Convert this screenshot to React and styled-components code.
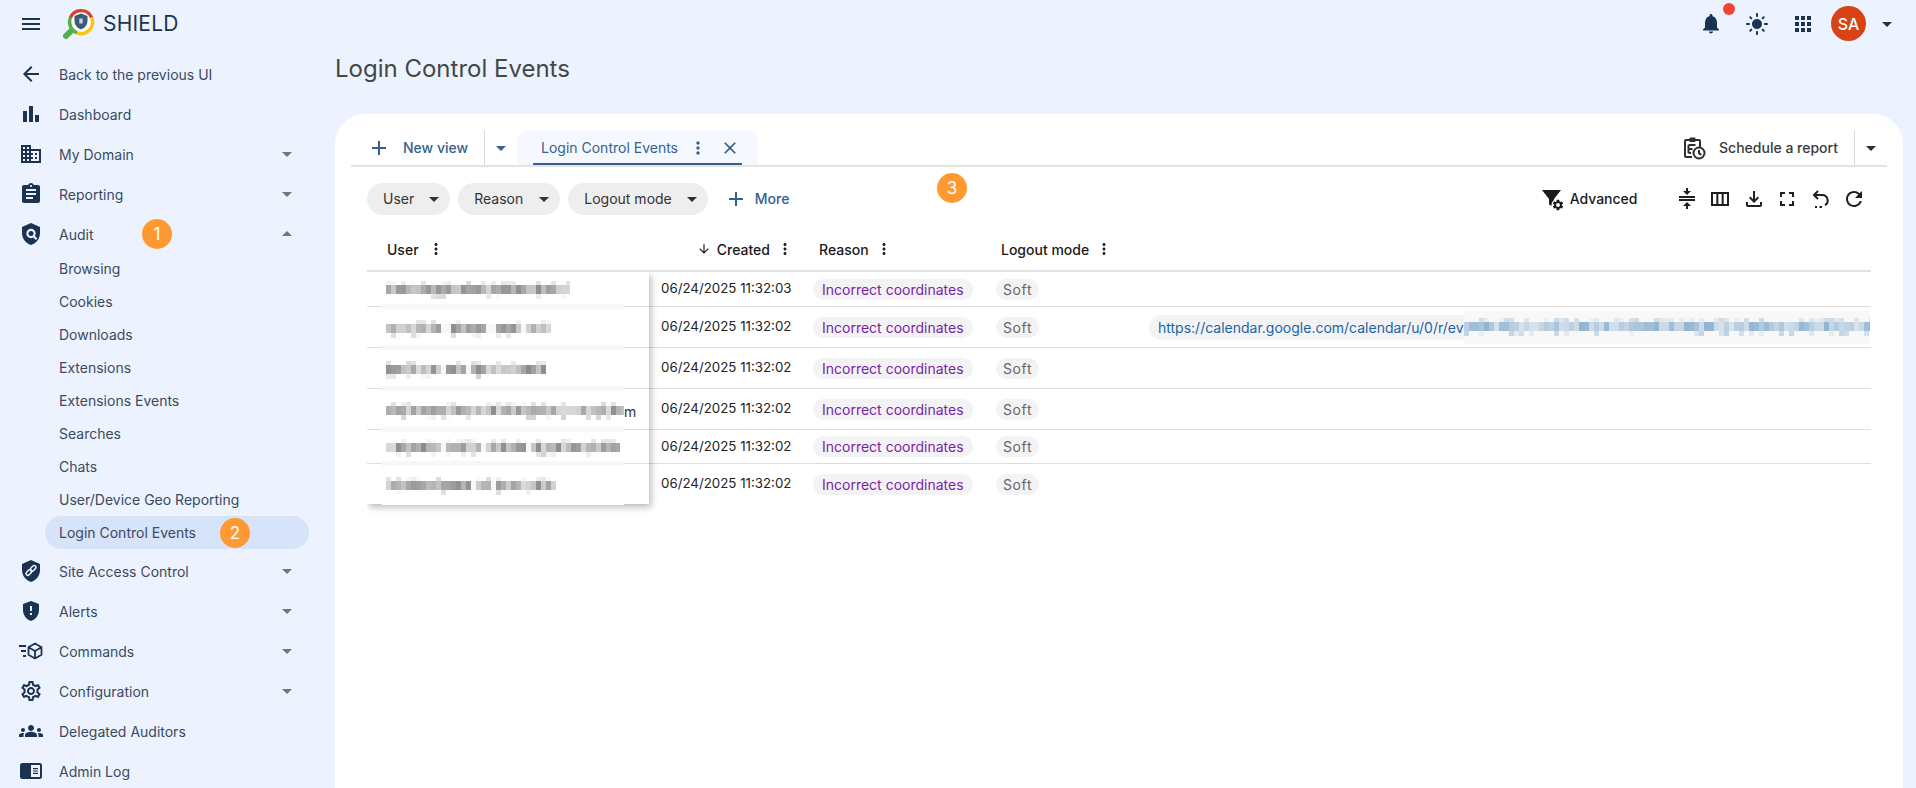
import React from "react";
import styled, { createGlobalStyle } from "styled-components";
import {
  MdMenu,
  MdArrowBack,
  MdBarChart,
  MdDomain,
  MdAssignment,
  MdGppMaybe,
  MdOutlineSettings,
  MdSettings,
  MdGroups,
  MdArrowDropDown,
  MdArrowDropUp,
  MdNotifications,
  MdLightMode,
  MdApps,
  MdAdd,
  MdMoreVert,
  MdClose,
  MdCompress,
  MdOutlineViewColumn,
  MdOutlineFileDownload,
  MdFullscreen,
  MdRefresh,
  MdArrowDownward,
} from "react-icons/md";

const SHIELD = "M12 1L3 5v6c0 5.55 3.84 10.74 9 12 5.16-1.26 9-6.45 9-12V5l-9-4z";
const BG = "#ecf3ff";

const GlobalStyle = createGlobalStyle`
  html, body {
    margin: 0;
    height: 100%;
    overflow: hidden;
    background: ${BG};
    font-family: Inter, "Liberation Sans", sans-serif;
  }
  * { box-sizing: border-box; }
`;

const Page = styled.div`
  width: 1916px;
  height: 788px;
  display: flex;
  flex-direction: column;
  overflow: hidden;
  background: ${BG};
`;

const TopBar = styled.header`
  height: 47px;
  flex: none;
  display: flex;
  align-items: center;
  padding: 0 17px 0 19px;
  color: #1b3350;
`;

const LogoBox = styled.div`
  margin-left: 19px;
  width: 34px;
  height: 34px;
  flex: none;
`;

const Brand = styled.span`
  margin-left: 7px;
  padding-bottom: 1px;
  font-size: 21px;
  color: #1b3350;
  letter-spacing: 0.2px;
`;

const TopIcons = styled.div`
  margin-left: auto;
  display: flex;
  align-items: center;
`;

const TopIcon = styled.div`
  position: relative;
  width: 24px;
  height: 24px;
  margin-right: ${(p) => p.$gap}px;
  color: #1b3350;
  display: flex;
  align-items: center;
  justify-content: center;
`;

const RedDot = styled.span`
  position: absolute;
  top: -9px;
  left: 24px;
  width: 12px;
  height: 12px;
  border-radius: 50%;
  background: #f44336;
`;

const Avatar = styled.div`
  width: 35px;
  height: 35px;
  margin-right: 9px;
  border-radius: 50%;
  background: #d84315;
  color: #fff;
  font-size: 16px;
  font-weight: 500;
  display: flex;
  align-items: center;
  justify-content: center;
`;

const Body = styled.div`
  flex: 1;
  display: flex;
  min-height: 0;
`;

const Sidebar = styled.nav`
  width: 335px;
  flex: none;
  padding-top: 7px;
`;

const NavRow = styled.div`
  position: relative;
  height: 40px;
  display: flex;
  align-items: center;
  padding: 0 36px 0 19px;
  color: #3b4a5e;
  font-size: 14px;
`;

const NavIcon = styled.span`
  width: 24px;
  height: 24px;
  flex: none;
  margin-right: 16px;
  color: #1b3350;
  display: flex;
  align-items: center;
  justify-content: center;
`;

const NavCaret = styled.span`
  margin-left: auto;
  display: flex;
  color: #757575;
`;

const SubList = styled.div`
  margin: -2px 0 2px;
`;

const SubRow = styled.div`
  position: relative;
  height: 33px;
  width: 264px;
  margin-left: 45px;
  display: flex;
  align-items: center;
  padding-left: 14px;
  border-radius: 17px;
  color: #3b4a5e;
  font-size: 14px;
  background: ${(p) => (p.$active ? "#d6e3f8" : "transparent")};
`;

const Badge = styled.span`
  position: absolute;
  left: ${(p) => p.$left}px;
  top: ${(p) => p.$top}px;
  width: 30px;
  height: 30px;
  border-radius: 50%;
  background: #ff9a33;
  color: #fff;
  font-size: 17px;
  display: flex;
  align-items: center;
  justify-content: center;
  z-index: 5;
`;

const Main = styled.main`
  flex: 1;
  min-width: 0;
  display: flex;
  flex-direction: column;
  padding-right: 13px;
`;

const Title = styled.h1`
  margin: 0;
  height: 67px;
  padding: 7px 0 0 0;
  font-size: 24px;
  line-height: 29px;
  font-weight: 400;
  color: #444746;
`;

const Panel = styled.section`
  position: relative;
  flex: 1;
  background: #fff;
  border-radius: 30px 30px 0 0;
  padding: 16px 16px 0;
`;

const TabBar = styled.div`
  height: 37px;
  display: flex;
  border-bottom: 2px solid #e3e3e3;
`;

const NewView = styled.div`
  width: 134px;
  height: 35px;
  display: flex;
  align-items: center;
  padding-left: 16px;
  border-right: 1px solid #d9d9d9;
  color: #36618e;
  font-size: 14px;
  font-weight: 500;
  gap: 12px;
`;

const SplitCaret = styled.span`
  width: 32px;
  display: flex;
  align-items: center;
  justify-content: center;
  color: ${(p) => p.$color};
`;

const Tab = styled.div`
  width: 241px;
  height: 35px;
  padding: 0 16px;
  background: #f5f8fe;
  border-radius: 12px 12px 0 0;
`;

const TabInner = styled.div`
  height: 35px;
  display: flex;
  align-items: center;
  padding: 2px 0 0 8px;
  border-bottom: 2px solid #36618e;
  color: #36618e;
  font-size: 14px;
`;

const TabIcon = styled.span`
  display: flex;
  margin-left: ${(p) => p.$gap}px;
  color: #36618e;
`;

const ScheduleBtn = styled.div`
  margin-left: auto;
  height: 35px;
  display: flex;
  align-items: center;
  gap: 13px;
  padding-right: 16px;
  border-right: 1px solid #d9d9d9;
  color: #3a3a3a;
  font-size: 14px;
  font-weight: 500;
`;

const Toolbar = styled.div`
  height: 63px;
  display: flex;
  align-items: center;
  padding: 0 21px 0 16px;
  gap: 8px;
`;

const FilterChip = styled.div`
  height: 32px;
  display: flex;
  align-items: center;
  padding: 0 4px 0 16px;
  gap: ${(p) => p.$gap}px;
  border-radius: 16px;
  background: #eeeeee;
  color: #333;
  font-size: 14px;
`;

const MoreBtn = styled.div`
  margin-left: 8px;
  display: flex;
  align-items: center;
  gap: 7px;
  color: #36618e;
  font-size: 14px;
  font-weight: 500;
`;

const Advanced = styled.div`
  margin-left: auto;
  margin-right: 29px;
  display: flex;
  align-items: center;
  gap: 6px;
  color: #1a1a1a;
  font-size: 14px;
  font-weight: 500;
`;

const ToolIcons = styled.div`
  display: flex;
  gap: 9.5px;
  color: #1f1f1f;
`;

const Table = styled.div`
  position: relative;
  margin: 0 16px;
`;

const HeadRow = styled.div`
  height: 42px;
  display: flex;
  border-bottom: 2px solid #e3e3e3;
`;

const HeadCell = styled.div`
  width: ${(p) => p.$w}px;
  flex: none;
  display: flex;
  align-items: center;
  justify-content: ${(p) => (p.$end ? "flex-end" : "flex-start")};
  padding: ${(p) => p.$pad};
  padding-bottom: 2px;
  gap: ${(p) => p.$gap || 6}px;
  color: #1a1a1a;
  font-size: 14px;
  font-weight: 500;
`;

const Dots = styled.span`
  display: flex;
  color: #1f1f1f;
`;

const Row = styled.div`
  position: relative;
  height: ${(p) => p.$h}px;
  display: flex;
  align-items: center;
  border-bottom: ${(p) => (p.$last ? "0" : "1px solid #dedede")};
`;

const UserCell = styled.div`
  position: relative;
  width: 282px;
  height: 100%;
  flex: none;
  z-index: 1;
  font-size: 14px;
  color: #333;
`;

const UserShadow = styled.div`
  position: absolute;
  left: 0;
  top: 42px;
  bottom: 0;
  width: 282px;
  box-shadow: 2px 3px 7px rgba(0, 0, 0, 0.28);
  clip-path: inset(0 -12px -12px 0);
  pointer-events: none;
`;

const Patch = styled.div`
  position: absolute;
  left: 15px;
  width: 242px;
  top: ${(p) => (p.$first ? "0" : "-3px")};
  bottom: -1px;
  background: #fff;
  border-top: ${(p) => (p.$first ? "0" : "5px solid #f7f7f7")};
  display: flex;
  align-items: center;
  padding-left: 4px;
`;

const Trail = styled.span`
  position: absolute;
  left: 242px;
  top: 50%;
  transform: translateY(-50%);
`;

const DateCell = styled.div`
  width: 154px;
  flex: none;
  padding: 0 0 2px 12px;
  font-size: 13.3px;
  color: #222;
  white-space: nowrap;
`;

const ChipCell = styled.div`
  width: ${(p) => p.$w}px;
  flex: none;
  padding-left: 10px;
`;

const Tag = styled.span`
  display: inline-block;
  height: 21px;
  line-height: 21px;
  padding: 0 ${(p) => p.$pad}px;
  border-radius: 11px;
  background: #f3f3f6;
  color: ${(p) => p.$color};
  font-size: 14px;
  letter-spacing: ${(p) => p.$ls || 0}px;
  white-space: nowrap;
`;

const LinkCell = styled.div`
  flex: 1;
  min-width: 0;
  overflow: hidden;
  padding-left: 10px;
  height: 100%;
  display: flex;
  align-items: center;
`;

const LinkChip = styled.div`
  height: 25px;
  display: flex;
  align-items: center;
  padding-left: 9px;
  border-radius: 13px 0 0 13px;
  background: #f3f3f6;
  color: #1b64a6;
  font-size: 14px;
  white-space: nowrap;
`;

const LinkBlur = styled.div`
  height: 33px;
  display: flex;
  align-items: center;
  background: #f8f8f8;
  flex: none;
`;

function rng(seed) {
  let s = seed;
  return () => {
    s = (s * 9301 + 49297) % 233280;
    return s / 233280;
  };
}

// pixelated redaction, as in the screenshot
function Mosaic({ width, seed, rgb = "90,90,90", gaps = [], strength = 1 }) {
  const r = rng(seed);
  const cells = [];
  const size = 5;
  for (let x = 0; x < width; x += size) {
    const inGap = gaps.some(([a, b]) => x >= a && x < b);
    const mid = inGap ? 0.05 : (0.22 + r() * 0.48) * strength;
    cells.push(<rect key={x} x={x} y="4" width={size} height="9" fill={`rgba(${rgb},${mid})`} />);
    if (r() > 0.55 && !inGap) {
      cells.push(
        <rect key={x + "t"} x={x} y="0" width={size} height="4" fill={`rgba(${rgb},${r() * 0.22})`} />
      );
    }
    if (r() > 0.75 && !inGap) {
      cells.push(
        <rect key={x + "b"} x={x} y="13" width={size} height="5" fill={`rgba(${rgb},${r() * 0.28})`} />
      );
    }
  }
  return (
    <svg width={width} height="18">
      {cells}
    </svg>
  );
}

const Logo = () => (
  <svg viewBox="0 0 34 34" width="34" height="34">
    <path d="M10 23 L4 29" stroke="#55b047" strokeWidth="6" strokeLinecap="round" />
    <circle cx="19" cy="15" r="11.5" fill="#fff" />
    <path d="M8.3 11 A11.5 11.5 0 0 1 29.6 10.5" fill="none" stroke="#d8412f" strokeWidth="3.4" />
    <path d="M29.6 10.5 A11.5 11.5 0 0 1 15 25.8" fill="none" stroke="#f5c518" strokeWidth="3.4" />
    <path d="M15 25.8 A11.5 11.5 0 0 1 8.3 11" fill="none" stroke="#55b047" strokeWidth="3.4" />
    <path d="M19 6.5l-6.5 2.6v4.6c0 4 2.8 7.6 6.5 8.6 3.7-1 6.5-4.6 6.5-8.6V9.1z" fill="#3d5a78" />
    <rect x="17.3" y="11.5" width="3.4" height="5" fill="#c6d3e0" />
  </svg>
);

const AuditIcon = () => (
  <svg viewBox="0 0 24 24" width="24" height="24" fill="currentColor">
    <path d={SHIELD} />
    <circle cx="12" cy="11.5" r="3.6" fill="none" stroke={BG} strokeWidth="2.2" />
    <path d="M14.6 14.2l3 3" stroke={BG} strokeWidth="2.2" />
  </svg>
);

const SiteIcon = () => (
  <svg viewBox="0 0 24 24" width="24" height="24" fill="currentColor">
    <path d={SHIELD} />
    <g fill="none" stroke={BG} strokeWidth="1.5">
      <rect x="6.6" y="11.6" width="6.6" height="3.6" rx="1.8" transform="rotate(-45 9.9 13.4)" />
      <rect x="10.8" y="7.6" width="6.6" height="3.6" rx="1.8" transform="rotate(-45 14.1 9.4)" />
    </g>
  </svg>
);

const CommandsIcon = () => (
  <svg viewBox="0 0 24 24" width="24" height="24" fill="none" stroke="currentColor" strokeWidth="1.8">
    <path d="M0 7h7M2 12h5M4 17h3" />
    <path d="M16 4.5l6.5 3.7v7.6L16 19.5l-6.5-3.7V8.2zM9.5 8.2L16 12l6.5-3.8M16 12v7.5" />
  </svg>
);

const AdminLogIcon = () => (
  <svg viewBox="0 0 24 24" width="24" height="24" fill="currentColor">
    <rect x="1" y="4" width="22" height="16" rx="2.5" />
    <rect x="12" y="6" width="9" height="12" fill={BG} />
    <path d="M14 9h5v1.2h-5zM14 11.4h5v1.2h-5zM14 13.8h5V15h-5z" />
  </svg>
);

const ScheduleIcon = () => (
  <svg viewBox="0 0 24 24" width="24" height="24" fill="none" stroke="#2f2f2f" strokeWidth="2">
    <path d="M10 21H4a1 1 0 0 1-1-1V5a1 1 0 0 1 1-1h13a1 1 0 0 1 1 1v6" />
    <rect x="7.5" y="1.5" width="6" height="4.5" fill="#2f2f2f" stroke="none" rx="1" />
    <path d="M6.5 9h7M6.5 13h4M6.5 17h2.5M6.5 9v8" />
    <circle cx="17" cy="17" r="5.5" />
    <path d="M17 14v3.2l2.4 1.6" />
  </svg>
);

const FilterGearIcon = () => (
  <svg viewBox="0 0 24 24" width="24" height="24" fill="#1a1a1a">
    <path d="M2 3h19l-7 9v8l-5-2.5V12z" />
    <circle cx="18" cy="18" r="6.5" fill="#fff" />
    <MdSettings x="11.5" y="11.5" size={13} color="#1a1a1a" />
  </svg>
);

const ResetIcon = () => (
  <svg viewBox="0 0 24 24" width="24" height="24" fill="none" stroke="#1f1f1f" strokeWidth="2">
    <path d="M9 4L5 8l4 4" />
    <path d="M5 8h8a5.5 5.5 0 0 1 3 10.2" />
    <path d="M13 20h-2.5M8 20H6" />
  </svg>
);

const sub = [
  "Browsing",
  "Cookies",
  "Downloads",
  "Extensions",
  "Extensions Events",
  "Searches",
  "Chats",
  "User/Device Geo Reporting",
];

const rows = [
  { h: 35, date: "06/24/2025 11:32:03", w: 184, seed: 11, gaps: [] },
  { h: 41, date: "06/24/2025 11:32:02", w: 165, seed: 27, gaps: [[55, 65], [100, 110], [135, 140]], link: true },
  { h: 41, date: "06/24/2025 11:32:02", w: 160, seed: 43, gaps: [[55, 60], [80, 85]] },
  { h: 41, date: "06/24/2025 11:32:02", w: 238, seed: 59, gaps: [], trail: "m" },
  { h: 34, date: "06/24/2025 11:32:02", w: 234, seed: 71, gaps: [[55, 60], [95, 100], [140, 145]] },
  { h: 40, date: "06/24/2025 11:32:02", w: 170, seed: 97, gaps: [[85, 90], [105, 110]], last: true },
];

export default function App() {
  return (
    <Page>
      <GlobalStyle />
      <TopBar>
        <MdMenu size={24} />
        <LogoBox>
          <Logo />
        </LogoBox>
        <Brand>SHIELD</Brand>
        <TopIcons>
          <TopIcon $gap={22}>
            <MdNotifications size={27} />
            <RedDot />
          </TopIcon>
          <TopIcon $gap={22}>
            <MdLightMode size={24} />
          </TopIcon>
          <TopIcon $gap={16}>
            <MdApps size={24} />
          </TopIcon>
          <Avatar>SA</Avatar>
          <TopIcon $gap={0}>
            <MdArrowDropDown size={24} />
          </TopIcon>
        </TopIcons>
      </TopBar>
      <Body>
        <Sidebar>
          <NavRow>
            <NavIcon><MdArrowBack size={24} /></NavIcon>
            Back to the previous UI
          </NavRow>
          <NavRow>
            <NavIcon><MdBarChart size={32} /></NavIcon>
            Dashboard
          </NavRow>
          <NavRow>
            <NavIcon><MdDomain size={24} /></NavIcon>
            My Domain
            <NavCaret><MdArrowDropDown size={24} /></NavCaret>
          </NavRow>
          <NavRow>
            <NavIcon><MdAssignment size={24} /></NavIcon>
            Reporting
            <NavCaret><MdArrowDropDown size={24} /></NavCaret>
          </NavRow>
          <NavRow>
            <NavIcon><AuditIcon /></NavIcon>
            Audit
            <Badge $left={142} $top={5}>1</Badge>
            <NavCaret><MdArrowDropUp size={24} /></NavCaret>
          </NavRow>
          <SubList>
            {sub.map((s) => (
              <SubRow key={s}>{s}</SubRow>
            ))}
            <SubRow $active>
              Login Control Events
              <Badge $left={175} $top={2}>2</Badge>
            </SubRow>
          </SubList>
          <NavRow>
            <NavIcon><SiteIcon /></NavIcon>
            Site Access Control
            <NavCaret><MdArrowDropDown size={24} /></NavCaret>
          </NavRow>
          <NavRow>
            <NavIcon><MdGppMaybe size={24} /></NavIcon>
            Alerts
            <NavCaret><MdArrowDropDown size={24} /></NavCaret>
          </NavRow>
          <NavRow>
            <NavIcon><CommandsIcon /></NavIcon>
            Commands
            <NavCaret><MdArrowDropDown size={24} /></NavCaret>
          </NavRow>
          <NavRow>
            <NavIcon><MdOutlineSettings size={24} /></NavIcon>
            Configuration
            <NavCaret><MdArrowDropDown size={24} /></NavCaret>
          </NavRow>
          <NavRow>
            <NavIcon><MdGroups size={26} /></NavIcon>
            Delegated Auditors
          </NavRow>
          <NavRow>
            <NavIcon><AdminLogIcon /></NavIcon>
            Admin Log
          </NavRow>
        </Sidebar>
        <Main>
          <Title>Login Control Events</Title>
          <Panel>
            <TabBar>
              <NewView>
                <MdAdd size={24} />
                New view
              </NewView>
              <SplitCaret $color="#36618e"><MdArrowDropDown size={24} /></SplitCaret>
              <Tab>
                <TabInner>
                  Login Control Events
                  <TabIcon $gap={10}><MdMoreVert size={20} /></TabIcon>
                  <TabIcon $gap={12}><MdClose size={20} /></TabIcon>
                </TabInner>
              </Tab>
              <ScheduleBtn>
                <ScheduleIcon />
                Schedule a report
              </ScheduleBtn>
              <SplitCaret $color="#2f2f2f"><MdArrowDropDown size={24} /></SplitCaret>
            </TabBar>
            <Badge $left={602} $top={59}>3</Badge>
            <Toolbar>
              <FilterChip $gap={8}>User<MdArrowDropDown size={24} /></FilterChip>
              <FilterChip $gap={9}>Reason<MdArrowDropDown size={24} /></FilterChip>
              <FilterChip $gap={8}>Logout mode<MdArrowDropDown size={24} /></FilterChip>
              <MoreBtn><MdAdd size={24} />More</MoreBtn>
              <Advanced><FilterGearIcon />Advanced</Advanced>
              <ToolIcons>
                <MdCompress size={24} />
                <MdOutlineViewColumn size={24} />
                <MdOutlineFileDownload size={24} />
                <MdFullscreen size={24} />
                <ResetIcon />
                <MdRefresh size={24} />
              </ToolIcons>
            </Toolbar>
            <Table>
              <HeadRow>
                <HeadCell $w={282} $pad="0 0 0 20px" $gap={8}>
                  User <Dots><MdMoreVert size={18} /></Dots>
                </HeadCell>
                <HeadCell $w={154} $end $pad="0 9px 0 0" $gap={6}>
                  <MdArrowDownward size={14} />
                  Created <Dots><MdMoreVert size={18} /></Dots>
                </HeadCell>
                <HeadCell $w={183} $pad="0 0 0 16px" $gap={6}>
                  Reason <Dots><MdMoreVert size={18} /></Dots>
                </HeadCell>
                <HeadCell $w={153} $pad="0 0 0 15px" $gap={6}>
                  Logout mode <Dots><MdMoreVert size={18} /></Dots>
                </HeadCell>
              </HeadRow>
              {rows.map((r, i) => (
                <Row key={i} $h={r.h} $last={r.last}>
                  <UserCell>
                    <Patch $first={i === 0}>
                      <Mosaic width={r.w} seed={r.seed} gaps={r.gaps} />
                      {r.trail && <Trail>{r.trail}</Trail>}
                    </Patch>
                  </UserCell>
                  <DateCell>{r.date}</DateCell>
                  <ChipCell $w={183}>
                    <Tag $pad={9} $color="#7b1fa2">Incorrect coordinates</Tag>
                  </ChipCell>
                  <ChipCell $w={153}>
                    <Tag $pad={7} $color="#666" $ls={0.6}>Soft</Tag>
                  </ChipCell>
                  {r.link && (
                    <LinkCell>
                      <LinkChip>https://calendar.google.com/calendar/u/0/r/ev</LinkChip>
                      <LinkBlur>
                        <Mosaic width={406} seed={131} rgb="40,110,170" strength={0.7} />
                      </LinkBlur>
                    </LinkCell>
                  )}
                </Row>
              ))}
              <UserShadow />
            </Table>
          </Panel>
        </Main>
      </Body>
    </Page>
  );
}
